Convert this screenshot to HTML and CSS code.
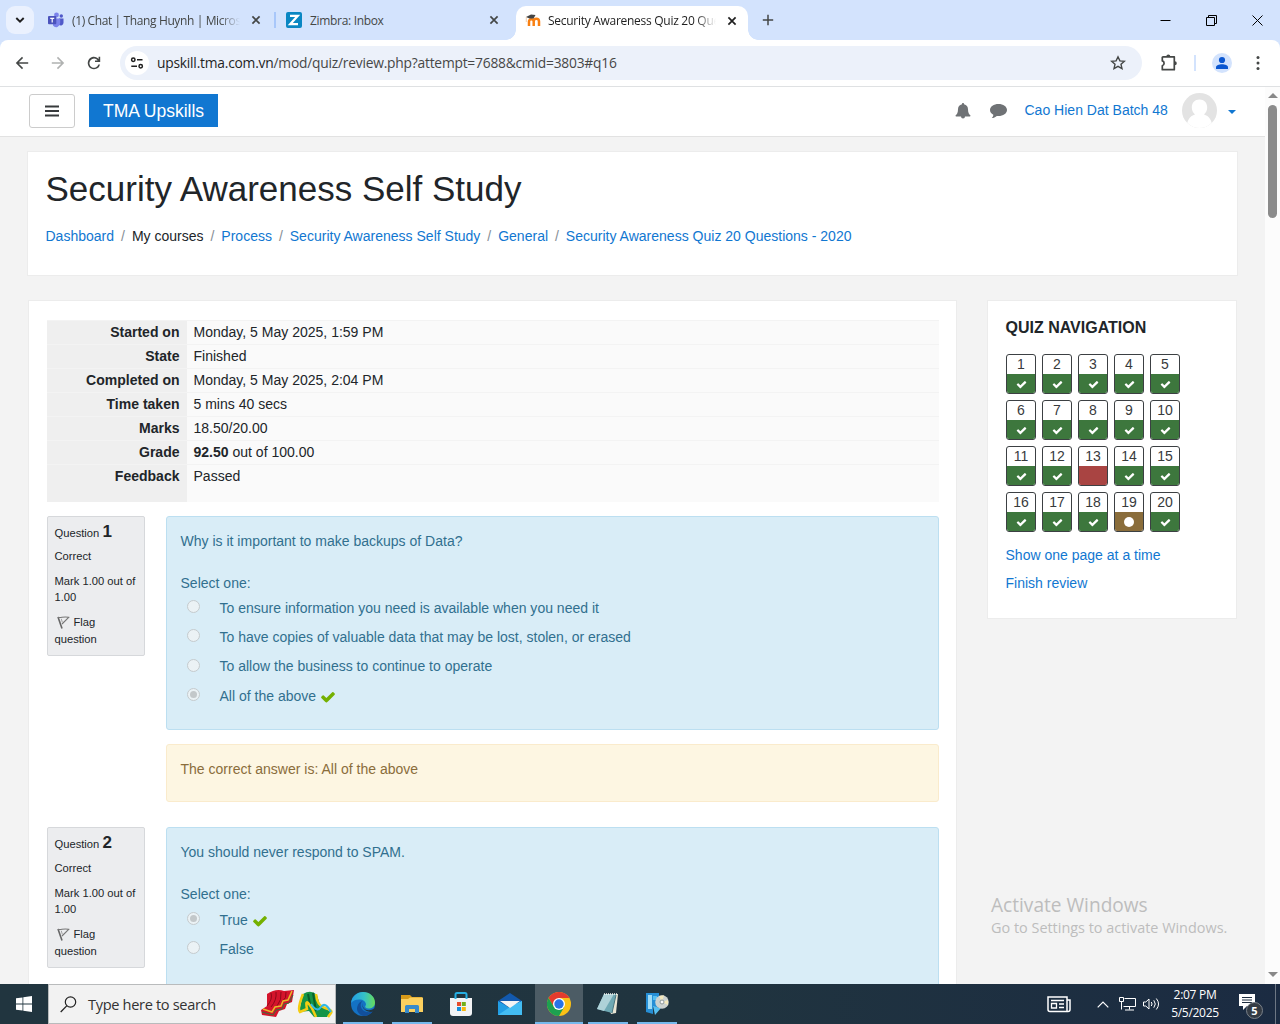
FILE: index.html
```html
<!DOCTYPE html>
<html lang="en">
<head>
<meta charset="utf-8">
<title>Security Awareness Quiz 20 Questions - 2020</title>
<link rel="stylesheet" href="styles.css">
</head>
<body>
<svg class="defs" width="0" height="0">
  <symbol id="check" viewBox="0 0 1792 1792"><path d="M1671 566q0 40-28 68l-724 724-136 136q-28 28-68 28t-68-28l-136-136-362-362q-28-28-28-68t28-68l136-136q28-28 68-28t68 28l294 295 656-657q28-28 68-28t68 28l136 136q28 28 28 68z"/></symbol>
  <symbol id="close" viewBox="0 0 10 10"><path d="M1.4 1.4l7.2 7.2M8.6 1.4L1.4 8.600" fill="none" stroke="currentColor" stroke-width="1.7"/></symbol>
  <symbol id="flag" viewBox="0 0 13 14"><path d="M1 2L5 13.500" fill="none" stroke="#666" stroke-width="1.600"/><path d="M1 2.200C4 3.200 6 1.200 11.700 2.300L5 9" fill="none" stroke="#777" stroke-width="1.100"/><path d="M4.300 3.800L5.300 7.300" stroke="#999" stroke-width=".9"/></symbol>
</svg>

<div class="tabs">
  <div class="tab-search"><svg width="10" height="10" viewBox="0 0 10 10"><path d="M1.300 3L5 6.700 8.700 3" fill="none" stroke="#1f1f1f" stroke-width="1.900"/></svg></div>
  <div class="tab tab-a">
    <svg width="16" height="16" viewBox="0 0 16 16"><circle cx="8.500" cy="3" r="2.400" fill="#7b83eb"/><circle cx="13.300" cy="4" r="1.700" fill="#5059c9"/><path d="M11 6.500h4.500v4.200a2.700 2.700 0 0 1-4.500 2z" fill="#5059c9"/><path d="M5 6.500h7.200v4.600a4 4 0 0 1-7.200 2.400z" fill="#7b83eb"/><rect y="4" width="8.300" height="8.300" rx="1" fill="#4b53bc"/><path d="M2.200 6.300h4M4.200 6.300v4.300" stroke="#fff" stroke-width="1.200"/></svg>
    <span class="tab-title t1">(1) Chat | Thang Huynh | Micros</span>
    <svg class="x" width="10" height="10"><use href="#close"/></svg>
  </div>
  <i class="tab-sep"></i>
  <div class="tab tab-b">
    <svg width="16" height="16" viewBox="0 0 16 16"><rect width="16" height="16" rx="2" fill="#0a87c3"/><path d="M4 3.800h7.800L4.200 12.200H12" fill="none" stroke="#fff" stroke-width="2.200"/></svg>
    <span class="tab-title t2">Zimbra: Inbox</span>
    <svg class="x" width="10" height="10"><use href="#close"/></svg>
  </div>
  <div class="tab tab-c">
    <svg width="16" height="16" viewBox="0 0 16 16"><path d="M4 13V8.500a2.300 2.300 0 0 1 4.700 0V13M8.700 8.500a2.600 2.600 0 0 1 5.300 0V13" fill="none" stroke="#f98012" stroke-width="2.500"/><path d="M1 4l5-2.500 4.500.5-2 3.500H4.500z" fill="#444"/><path d="M1.300 4v5" stroke="#e9b98c" stroke-width=".7"/></svg>
    <span class="tab-title t3">Security Awareness Quiz 20 Que</span>
    <svg class="x" width="10" height="10"><use href="#close"/></svg>
  </div>
  <svg class="plus" width="12" height="12" viewBox="0 0 12 12"><path d="M6 .8v10.400M.8 6h10.400" stroke="#444746" stroke-width="1.500"/></svg>
  <div class="winbtns">
    <svg width="11" height="11" viewBox="0 0 11 11"><path d="M.5 5.500h10" stroke="#000"/></svg>
    <svg width="11" height="11" viewBox="0 0 11 11"><path d="M.5 2.500h8v8h-8zM2.500 2.500v-2h8v8h-2" fill="none" stroke="#000"/></svg>
    <svg width="11" height="11" viewBox="0 0 11 11"><path d="M.5 .5l10 10M10.500 .5l-10 10" stroke="#000"/></svg>
  </div>
</div>

<div class="toolbar">
  <svg class="nav" width="16" height="16" viewBox="4 4 16 16"><path fill="#444746" d="M8.800 12.800l4.300 4.300-1.100 1.100L5.800 12 12 5.800l1.100 1.100-4.300 4.300h9.400v1.600z"/></svg>
  <svg class="nav" width="16" height="16" viewBox="4 4 16 16"><path fill="#b0b2b1" d="M15.200 12.800l-4.300 4.300 1.100 1.100 6.200-6.200L12 5.800l-1.100 1.100 4.300 4.300H5.800v1.600z"/></svg>
  <svg class="nav" width="16" height="16" viewBox="4 4 16 16"><path fill="#444746" d="M12 18.200a6.200 6.200 0 1 1 4.600-10.300V5.800h1.600v5.200h-5.200V9.400h2.700a4.600 4.600 0 1 0 .7 4.200h1.600A6.200 6.200 0 0 1 12 18.200z"/></svg>
  <div class="omnibox">
    <div class="site"><svg width="14" height="12" viewBox="0 0 14 12"><g fill="none" stroke="#1f1f1f" stroke-width="1.500"><circle cx="3.300" cy="2.800" r="1.700"/><path d="M7 2.800h5.500M1.300 9.200H7"/><circle cx="10.700" cy="9.200" r="1.700"/></g></svg></div>
    <span class="url"><b>upskill.tma.com.vn</b>/mod/quiz/review.php?attempt=7688&amp;cmid=3803#q16</span>
    <svg class="star" width="16" height="16" viewBox="0 0 16 16"><path d="M8 1.800l1.900 4.100 4.500.4-3.400 3 1 4.400L8 11.400l-4 2.300 1-4.400-3.400-3 4.500-.4z" fill="none" stroke="#444746" stroke-width="1.400"/></svg>
  </div>
  <svg class="ext" width="18" height="18" viewBox="0 0 18 18"><path d="M2.300 2.800h12v4.600M14.300 11v4.700h-12v-4c2.400-.6 2.400-4.200 0-4.800V2.800M14.300 7v4.500" fill="none" stroke="#444746" stroke-width="1.700" stroke-linejoin="round"/><path d="M6.300 2.500a2 2 0 0 1 4 0zM14.800 7.300a2 2 0 0 1 0 4z" fill="#444746"/></svg>
  <i class="tb-sep"></i>
  <svg class="profile" width="20" height="20" viewBox="0 0 20 20"><circle cx="10" cy="10" r="10" fill="#d3e3fd"/><circle cx="10" cy="7" r="3.100" fill="#0b57d0"/><path d="M4 16v-1.700c0-2 3-3 6-3s6 1 6 3V16z" fill="#0b57d0"/></svg>
  <svg width="4" height="16" viewBox="0 0 4 16" fill="#444746"><circle cx="2" cy="2.500" r="1.500"/><circle cx="2" cy="8" r="1.500"/><circle cx="2" cy="13.500" r="1.500"/></svg>
</div>

<div class="viewport">
  <div class="page">
    <nav class="navbar">
      <button class="burger"><svg width="14" height="12" viewBox="0 0 14 12"><path d="M0 1.500h14M0 6h14M0 10.500h14" stroke="#373a3c" stroke-width="2"/></svg></button>
      <div class="brand">TMA Upskills</div>
      <svg class="bell" width="16" height="16" viewBox="0 0 16 16"><path d="M8 0c.7 0 1.100.5 1 1.200 2.600.5 4 2.500 4 5 0 3.500 1 5 2.500 6.300 0 .7-.4 1-1 1H10a2 2 0 0 1-4 0H1.500c-.6 0-1-.3-1-1C2 11.200 3 9.700 3 6.200c0-2.500 1.400-4.500 4-5C6.900.5 7.300 0 8 0z" fill="#6f7275"/></svg>
      <svg class="bubble" width="17" height="14" viewBox="0 0 17 14"><path d="M8.500 0C13.200 0 17 2.600 17 6s-3.800 6-8.500 6l-1.700-.1C5.500 13 3.500 14 1.800 14c1-1 1.500-2 1.500-3.300C1.300 9.600 0 8 0 6c0-3.400 3.800-6 8.500-6z" fill="#6f7275"/></svg>
      <a class="user">Cao Hien Dat Batch 48</a>
      <svg class="avatar" width="35" height="35" viewBox="0 0 35 35"><defs><clipPath id="round"><circle cx="17.500" cy="17.500" r="17.500"/></clipPath></defs><g clip-path="url(#round)"><rect width="35" height="35" fill="#e3e3e3"/><path d="M17.500 6.500c4.600 0 7.700 3.200 7.700 8 0 3-1.300 5.300-3.200 7 5 1.500 8 5 8.500 13.500h-26c.5-8.500 3.500-12 8.500-13.500-1.900-1.700-3.200-4-3.200-7 0-4.800 3.100-8 7.700-8z" fill="#fff"/></g></svg>
      <i class="caret"></i>
    </nav>

    <header class="card head">
      <h1>Security Awareness Self Study</h1>
      <div class="crumbs"><a>Dashboard</a><i>/</i><span>My courses</span><i>/</i><a>Process</a><i>/</i><a>Security Awareness Self Study</a><i>/</i><a>General</a><i>/</i><a>Security Awareness Quiz 20 Questions - 2020</a></div>
    </header>

    <div class="cols">
      <main class="card main">
        <div class="summary">
          <div><b>Started on</b><span>Monday, 5 May 2025, 1:59 PM</span></div>
          <div><b>State</b><span>Finished</span></div>
          <div><b>Completed on</b><span>Monday, 5 May 2025, 2:04 PM</span></div>
          <div><b>Time taken</b><span>5 mins 40 secs</span></div>
          <div><b>Marks</b><span>18.50/20.00</span></div>
          <div><b>Grade</b><span><strong>92.50</strong> out of 100.00</span></div>
          <div class="last"><b>Feedback</b><span>Passed</span></div>
        </div>

        <section class="que q1">
          <div class="info"><h3>Question <b>1</b></h3><p>Correct</p><p>Mark 1.00 out of 1.00</p><p><svg class="flag" width="13" height="14"><use href="#flag"/></svg>Flag question</p></div>
          <div class="content">
            <div class="form">
              <p class="text">Why is it important to make backups of Data?</p>
              <p>Select one:</p>
              <div class="opt"><i class="radio"></i>To ensure information you need is available when you need it</div>
              <div class="opt"><i class="radio"></i>To have copies of valuable data that may be lost, stolen, or erased</div>
              <div class="opt"><i class="radio"></i>To allow the business to continue to operate</div>
              <div class="opt"><i class="radio on"></i>All of the above<svg class="ok" width="16" height="16"><use href="#check"/></svg></div>
            </div>
            <div class="feedback">The correct answer is: All of the above</div>
          </div>
        </section>

        <section class="que q2">
          <div class="info"><h3>Question <b>2</b></h3><p>Correct</p><p>Mark 1.00 out of 1.00</p><p><svg class="flag" width="13" height="14"><use href="#flag"/></svg>Flag question</p></div>
          <div class="content">
            <div class="form">
              <p class="text">You should never respond to SPAM.</p>
              <p>Select one:</p>
              <div class="opt"><i class="radio on"></i>True<svg class="ok" width="16" height="16"><use href="#check"/></svg></div>
              <div class="opt"><i class="radio"></i>False</div>
            </div>
          </div>
        </section>
      </main>

      <aside class="card quiznav">
        <h2>QUIZ NAVIGATION</h2>
        <div class="grid">
          <div class="n">1<i><svg><use href="#check"/></svg></i></div><div class="n">2<i><svg><use href="#check"/></svg></i></div><div class="n">3<i><svg><use href="#check"/></svg></i></div><div class="n">4<i><svg><use href="#check"/></svg></i></div><div class="n">5<i><svg><use href="#check"/></svg></i></div>
          <div class="n">6<i><svg><use href="#check"/></svg></i></div><div class="n">7<i><svg><use href="#check"/></svg></i></div><div class="n">8<i><svg><use href="#check"/></svg></i></div><div class="n">9<i><svg><use href="#check"/></svg></i></div><div class="n">10<i><svg><use href="#check"/></svg></i></div>
          <div class="n">11<i><svg><use href="#check"/></svg></i></div><div class="n">12<i><svg><use href="#check"/></svg></i></div><div class="n wrong">13<i></i></div><div class="n">14<i><svg><use href="#check"/></svg></i></div><div class="n">15<i><svg><use href="#check"/></svg></i></div>
          <div class="n">16<i><svg><use href="#check"/></svg></i></div><div class="n">17<i><svg><use href="#check"/></svg></i></div><div class="n">18<i><svg><use href="#check"/></svg></i></div><div class="n partial">19<i><em></em></i></div><div class="n">20<i><svg><use href="#check"/></svg></i></div>
        </div>
        <a>Show one page at a time</a>
        <a>Finish review</a>
      </aside>
    </div>
  </div>
  <div class="scrollbar"><i class="up"></i><i class="thumb"></i><i class="down"></i></div>
  <div class="watermark"><p class="w1">Activate Windows</p><p class="w2">Go to Settings to activate Windows.</p></div>
</div>

<footer class="taskbar">
  <div class="start"><svg width="16" height="16" viewBox="0 0 16 16"><path d="M0 2.300L6.500 1.400v6.100H0zM7.300 1.300L16 0v7.500H7.300zM0 8.400h6.500v6.200L0 13.700zM7.300 8.400H16V16l-8.700-1.300z" fill="#fff"/></svg></div>
  <div class="search">
    <svg width="17" height="17" viewBox="0 0 17 17"><circle cx="10.500" cy="6" r="5.200" fill="none" stroke="#222" stroke-width="1.200"/><path d="M6.700 9.900L.7 16" stroke="#222" stroke-width="1.300"/></svg>
    <span>Type here to search</span>
    <svg class="cloth" width="72" height="30" viewBox="0 0 72 30"><path d="M6 5Q15-1 23 2L33 1 31 13 26 15 24 20 18 22 15 28 1 26 0 21 6 17z" fill="#d4142b"/><path d="M10 4q2 6-4 13M15 3q1 8-5 15M20 3q1 8-4 14M25 3q1 6-4 10" fill="none" stroke="#8e0818"/><path d="M2 20l9 3 3-5 6-1 2-5 5-1 4-9" fill="none" stroke="#e9b928" stroke-width="1.500"/><path d="M1 23l11 3 3-5 6-1 2-5 5-1 4-8" fill="none" stroke="#39713d"/><path d="M42 5Q50 0 56 6L59 16 70 23 66 28 53 28 48 22 38 23z" fill="#159447"/><path d="M47 5l3 15M52 4l3 18" stroke="#07612c" stroke-width="2"/><path d="M42 5Q36 20 39 23L46 20Q44 10 48 15T55 28M55 5Q56 17 64 19T70 24L67 28" fill="none" stroke="#f4cc12" stroke-width="2.500"/><path d="M50 15Q56 24 60 18T70 23" fill="none" stroke="#31b8e7" stroke-width="2"/></svg>
  </div>
  <div class="app first run"><svg width="24" height="24" viewBox="0 0 24 24"><defs><linearGradient id="eg" x1="0" x2="1"><stop stop-color="#239de5"/><stop offset=".55" stop-color="#35c1c8"/><stop offset="1" stop-color="#67dc59"/></linearGradient></defs><circle cx="12" cy="12" r="12" fill="#1472c4"/><path d="M0 11C1 4 6 0 12 0c7 0 12 5 12 10.500 0 4-3 6-6.500 6-3 0-4-1.500-3-2.700C16 12 14 8 9.500 7.500 5 7 1.500 9 0 11z" fill="url(#eg)"/><path d="M11.500 9c-4 4-1 10 4.500 11 3 .5 5-.5 6.500-2-2 4-6 6-10.500 6C7 22 5 18 6.500 14c.8-2.500 2.500-4.500 5-5z" fill="#124f9b"/><path d="M12 11c-1.500 4 2 7.500 6 7.200 2 0 3.500-.5 4.800-1.700L24 17v2l-2.500.8C16 20.500 9.500 16.500 12 11z" fill="#21343f"/></svg></div>
  <div class="app run"><svg width="22" height="20" viewBox="0 0 22 20"><path d="M0 1h9l2 2h10v4H0z" fill="#d79a19"/><path d="M0 5h7l2-1.500h13V18H0z" fill="#fbd05f"/><path d="M4 19v-6.500q0-1.500 1.500-1.500h11q1.500 0 1.500 1.500V19h-4v-4H8v4z" fill="#378acb"/></svg></div>
  <div class="app"><svg width="24" height="24" viewBox="0 0 24 24"><path d="M1 6h22v15q0 3-3 3H4q-3 0-3-3z" fill="#f2f3f5"/><path d="M6.500 7V2.500q0-1.500 1.500-1.500h8q1.500 0 1.500 1.500V7" fill="none" stroke="#25aee3" stroke-width="2"/><path fill="#e74c2c" d="M8 10h4v4H8z"/><path fill="#72ae17" d="M12.800 10h4v4h-4z"/><path fill="#168fdc" d="M8 15h4v4H8z"/><path fill="#f7b80c" d="M12.800 15h4v4h-4z"/></svg></div>
  <div class="app"><svg width="24" height="22" viewBox="0 0 24 22"><path d="M0 8L12 0l12 8v5H0z" fill="#1259ad"/><path d="M0 8v14h24V8l-12 7z" fill="#219ee5"/><path d="M0 22L15 12 24 8v14z" fill="#43bdf3"/><path d="M2 8h20L12 15z" fill="#f4f4f4"/></svg></div>
  <div class="app run active"><svg width="24" height="24" viewBox="0 0 24 24"><circle cx="12" cy="12" r="12" fill="#fbc116"/><path d="M1.600 6A12 12 0 0 1 22.400 6H12L7 15z" fill="#e33b2e"/><path d="M1.600 6A12 12 0 0 0 12 24l5.200-9L7 15z" fill="#1da050"/><circle cx="12" cy="12" r="6" fill="#fff"/><circle cx="12" cy="12" r="4.700" fill="#2873e8"/></svg></div>
  <div class="app run"><svg width="24" height="24" viewBox="0 0 24 24"><path d="M9 2h13l-2 19-5 1z" fill="#e9e5d4"/><path d="M8 2h12l-4 19L1 17z" fill="#6fa9b4"/><path d="M8 2h10L8 18.900 1 17z" fill="#aed2d8"/><path d="M8 2h13" stroke="#f4f4ee" stroke-width="1.500" stroke-dasharray="1 1"/><path d="M20 3l-4 18" stroke="#47747e"/></svg></div>
  <div class="app run"><svg width="24" height="24" viewBox="0 0 24 24"><path d="M1 1h13v14H8v7l-7-2z" fill="#268fd6"/><path d="M3 3h4v14H3z" fill="#9fdcf7"/><path d="M8 4h4v4H8zM8 14l8 2-6 7z" fill="#57bff0"/><circle cx="17" cy="10" r="6.800" fill="#cbd1cf"/><path d="M17 10l-3-6 5-.7zM17 10l6-2v5z" fill="#f2e8bd"/><circle cx="17" cy="10" r="2" fill="#f8f8f8" stroke="#8c9698"/></svg></div>
  <div class="tray">
    <svg class="news" width="24" height="17" viewBox="0 0 24 17"><path d="M1 1h19v14.500H3Q1 15.500 1 13.500zM20 4h3v9.500q0 2-2 2h-2" fill="none" stroke="#fff" stroke-width="1.500"/><path d="M4 4.500h13M12 8h5M12 11.500h5" stroke="#fff" stroke-width="1.500"/><path d="M4.500 7.500h5v4.500h-5z" fill="none" stroke="#fff" stroke-width="1.300"/></svg>
    <svg class="chev" width="12" height="7" viewBox="0 0 12 7"><path d="M.7 6.300L6 1l5.300 5.300" fill="none" stroke="#fff" stroke-width="1.200"/></svg>
    <svg class="net" width="17" height="14" viewBox="0 0 17 14"><path d="M5.500 1.500h11v8h-12M2.500 5v7.500M10.500 9.500v3M6 13h9M.5.5h4v4h-4z" fill="none" stroke="#fff"/></svg>
    <svg class="vol" width="17" height="14" viewBox="0 0 17 14"><path d="M.5 5h2.300L6 2v10L2.800 9H.5zM8.300 5q1.500 2 0 4M10.800 3.300q3 3.700 0 7.400M13.300 1.500q4.500 5.500 0 11" fill="none" stroke="#fff"/></svg>
    <div class="clock"><span>2:07 PM</span><span>5/5/2025</span></div>
    <div class="notif"><svg width="17" height="16" viewBox="0 0 17 16"><path d="M0 0h16v12H8l-4 4v-4H0z" fill="#fff"/><path d="M3 3.500h10M3 6h10M3 8.500h10" stroke="#1c2c3f"/></svg><b>5</b></div>
    <i class="peek"></i>
  </div>
</footer>
</body>
</html>
```
FILE: styles.css
```css
* { box-sizing: border-box; }
body { margin: 0; width: 1280px; height: 1024px; overflow: hidden; display: flex; flex-direction: column; background: linear-gradient(#d3e3fd 60px, #fff 60px); font-family: "Liberation Sans", Arial, sans-serif; font-size: 14.020px; color: #212529; }
p, h1, h2, h3 { margin: 0; font-weight: 400; }
i, em { font-style: normal; }
svg { flex: none; display: block; }
.defs { position: absolute; }
a { color: #1177d1; }

.tabs { height: 40px; flex: none; display: flex; align-items: center; font: 12px "Open Sans", "Noto Sans", sans-serif; color: #444746; }
.tab-search { width: 28px; height: 28px; margin-left: 6px; border-radius: 9px; background: #eaf1fe; display: flex; align-items: center; justify-content: center; }
.tab { display: flex; align-items: center; height: 34px; }
.tab-a { margin-left: 14px; width: 226px; }
.tab-b { margin-left: 10px; width: 230px; }
.tab-c { align-self: flex-end; width: 232px; height: 34px; padding-left: 9px; padding-bottom: 5px; background: #fff; border-radius: 10px 10px 0 0; position: relative; color: #1f1f1f; }
.tab-c::before, .tab-c::after { content: ""; position: absolute; bottom: 0; width: 10px; height: 10px; }
.tab-c::before { left: -10px; background: radial-gradient(circle at 0 0, transparent 9.500px, #fff 10px); }
.tab-c::after { right: -10px; background: radial-gradient(circle at 100% 0, transparent 9.500px, #fff 10px); }
.tab-title { margin-left: 8px; width: 168px; white-space: nowrap; letter-spacing: -.32px; }
.t1, .t3 { -webkit-mask-image: linear-gradient(90deg, #000 88%, transparent); mask-image: linear-gradient(90deg, #000 88%, transparent); }
.t1 { letter-spacing: -.38px; }
.t2 { width: 168px; }
.t3 { margin-left: 7px; letter-spacing: -.28px; }
.x { margin-left: 11px; }
.tab-sep { width: 2px; height: 16px; background: #a8c7fa; }
.plus { margin-left: 14px; }
.winbtns { margin-left: auto; display: flex; gap: 35px; padding-right: 17.500px; }

.toolbar { height: 47px; flex: none; display: flex; align-items: center; background: #fff; border-bottom: 1px solid #dfe1e3; border-radius: 8px 8px 0 0; padding-left: 14px; }
.nav { margin-right: 20px; }
.omnibox { width: 1022px; height: 34px; margin-left: -2px; border-radius: 17px; background: #ecf1fa; display: flex; align-items: center; padding: 0 16px 0 5px; }
.site { width: 24px; height: 24px; border-radius: 50%; background: #fff; display: flex; align-items: center; justify-content: center; }
.url { margin: -2px 0 0 8px; font: 13.800px "Open Sans", "Noto Sans", sans-serif; letter-spacing: -.22px; color: #474747; }
.url b { font-weight: 400; color: #1f1f1f; }
.star { margin-left: auto; }
.ext { margin-left: 18px; }
.tb-sep { width: 2px; height: 16px; background: #d3e3fd; margin: 0 17px 0 16px; }
.profile { margin: 0 24px 0 -1px; }

.viewport { height: 897px; flex: none; display: flex; position: relative; overflow: hidden; }
.page { width: 1265px; background: #f3f3f3; overflow: hidden; }
.navbar { height: 50px; background: #fff; border-bottom: 1px solid #e2e2e2; display: flex; align-items: center; padding: 0 29px 2px; }
.burger { width: 46px; height: 34px; margin: 1px 14px 0 0; padding: 0; border: 1px solid #ccc; border-radius: 3px; background: #fff; display: flex; align-items: center; justify-content: center; }
.brand { width: 129px; height: 33px; background: #1177d1; color: #fff; font-size: 17.500px; line-height: 34px; text-align: center; }
.bell { margin-left: auto; }
.bubble { margin: 0 18px 0 19px; }
.user { width: 143.500px; white-space: nowrap; margin-top: -2px; }
.avatar { margin: 0 11px 0 14px; }
.caret { border: 4px solid transparent; border-top-color: #1177d1; border-bottom: 0; margin-top: 3px; }
.card { background: #fff; border: 1px solid #ececec; }
.head { margin: 14px 27px 0; height: 125px; padding: 16px 17.500px; }
.head h1 { font-size: 35px; line-height: 41px; }
.crumbs { margin-top: 17px; line-height: 20px; display: flex; }
.crumbs i { color: #868e96; width: 17.800px; text-align: center; }
.cols { display: flex; align-items: flex-start; justify-content: space-between; margin: 24px 28px 0; }
.main { width: 929px; height: 800px; padding: 19px 17px 0 18px; }
.summary div { display: flex; height: 24px; border-top: 1px solid #f3f3f3; background: #fafafa; line-height: 23px; }
.summary div.last { height: 38px; }
.summary b { width: 140px; padding-right: 7.500px; background: #efefef; text-align: right; }
.summary span { padding-left: 6.500px; }
.que { display: flex; align-items: flex-start; justify-content: space-between; margin-top: 14px; }
.q2 { margin-top: 25px; }
.info { width: 98px; height: 140px; border: 1px solid #d6d8db; border-radius: 2px; background: #ecedef; padding: 5px 6.500px; font-size: 11.200px; line-height: 16.800px; }
.q2 .info { height: 141px; padding-top: 6px; }
.info h3 { font-size: 11.200px; line-height: 18px; height: 18px; padding-top: 2px; margin-bottom: 8px; }
.q2 .info h3 { padding-top: .800px; }
.info h3 b { font-size: 17px; line-height: 16px; }
.info p { margin-bottom: 7.900px; }
.flag { display: inline-block; vertical-align: -3px; margin: 0 4px 0 2px; }
.content { width: 773px; }
.form { height: 214px; border: 1px solid #bcdff1; border-radius: 3px; background: #d9edf7; color: #31708f; padding: 14px 13.500px; }
.form p { line-height: 21px; }
.form .text { margin-bottom: 21px; }
.opt { display: flex; align-items: center; height: 29.300px; white-space: nowrap; }
.q1 .text + p { margin-bottom: -1px; }
.radio { flex: none; width: 13px; height: 13px; margin: -2px 19.500px 0 6.500px; border: 1px solid #c5cbce; border-radius: 50%; background: #ebf2f5; display: flex; align-items: center; justify-content: center; }
.on::after { content: ""; width: 7px; height: 7px; border-radius: 50%; background: #c3c8ca; }
.ok { fill: #74b000; margin: 2px 0 0 4px; }
.feedback { margin-top: 14px; height: 58px; border: 1px solid #faebcc; border-radius: 3px; background: #fdf6e2; color: #8a6d3b; padding: 14px 13.500px; line-height: 21px; }
.quiznav { width: 250px; height: 319px; padding: 17px 17.500px; }
.quiznav h2 { font-size: 16px; line-height: 20px; font-weight: 700; }
.grid { display: grid; grid-template-columns: repeat(5, 30px); gap: 6px; margin: 16px 0 9px .5px; }
.n { height: 40px; border: 1px solid #3c4043; border-radius: 3px; text-align: center; line-height: 19px; color: #373a3c; overflow: hidden; }
.n i { display: flex; height: 20px; align-items: center; justify-content: center; background: #3d773d; }
.n svg { width: 11px; height: 11px; fill: #fff; }
.n em { width: 10px; height: 10px; border-radius: 50%; background: #fff; }
.n.wrong i { background: #a94442; }
.n.partial i { background: #8a6d3b; }
.quiznav a { display: block; line-height: 28px; }
.scrollbar { width: 15px; background: #fcfcfc; display: flex; flex-direction: column; align-items: center; }
.up { border: 5px solid transparent; border-bottom: 5px solid #888; border-top: 0; margin-top: 6px; }
.thumb { width: 9px; height: 113px; border-radius: 5px; background: #8b8b8b; margin-top: 7px; }
.down { border: 5px solid transparent; border-top: 5px solid #888; border-bottom: 0; margin-top: auto; margin-bottom: 7px; }
.watermark { position: absolute; left: 991px; top: 805px; color: #bdbdbd; font-family: "Open Sans", "Noto Sans", sans-serif; white-space: nowrap; }
.w1 { font-size: 19.100px; line-height: 26px; }
.w2 { font-size: 14.430px; line-height: 20px; }

.taskbar { height: 40px; flex: none; display: flex; background: linear-gradient(90deg, #21353f, #20343f 55%, #1b2b42); color: #fff; font-family: "Open Sans", "Noto Sans", sans-serif; }
.start { width: 48px; display: flex; align-items: center; justify-content: center; }
.search { width: 288px; background: #f2f2f2; border: 1px solid #b9bbbc; display: flex; align-items: center; padding-left: 11px; color: #333; font-size: 14.600px; }
.search span { margin-left: 11px; width: 173px; white-space: nowrap; letter-spacing: -.34px; }
.app { width: 48px; margin-right: 1px; display: flex; align-items: center; justify-content: center; position: relative; }
.first { margin-left: 3px; }
.run::after { content: ""; position: absolute; left: 4px; right: 4px; bottom: 0; height: 2px; background: #76b9ed; }
.active { background: #4c5c65; }
.active::after { left: 0; right: 0; }
.tray { margin-left: auto; display: flex; align-items: center; }
.chev { margin-left: 26px; }
.net { margin-left: 10px; }
.vol { margin-left: 7px; }
.clock { width: 58px; margin-left: 6px; display: flex; flex-direction: column; align-items: center; font-size: 12px; line-height: 18px; letter-spacing: -.3px; white-space: nowrap; }
.notif { width: 24px; height: 20px; margin: 0 12px 0 15px; position: relative; }
.notif b { position: absolute; left: 7px; top: 8px; width: 17px; height: 17px; border-radius: 50%; background: #343b44; border: 1px solid #7b828a; font-size: 11px; line-height: 15px; text-align: center; }
.peek { width: 5px; height: 40px; border-left: 1px solid #6d7784; }
```
